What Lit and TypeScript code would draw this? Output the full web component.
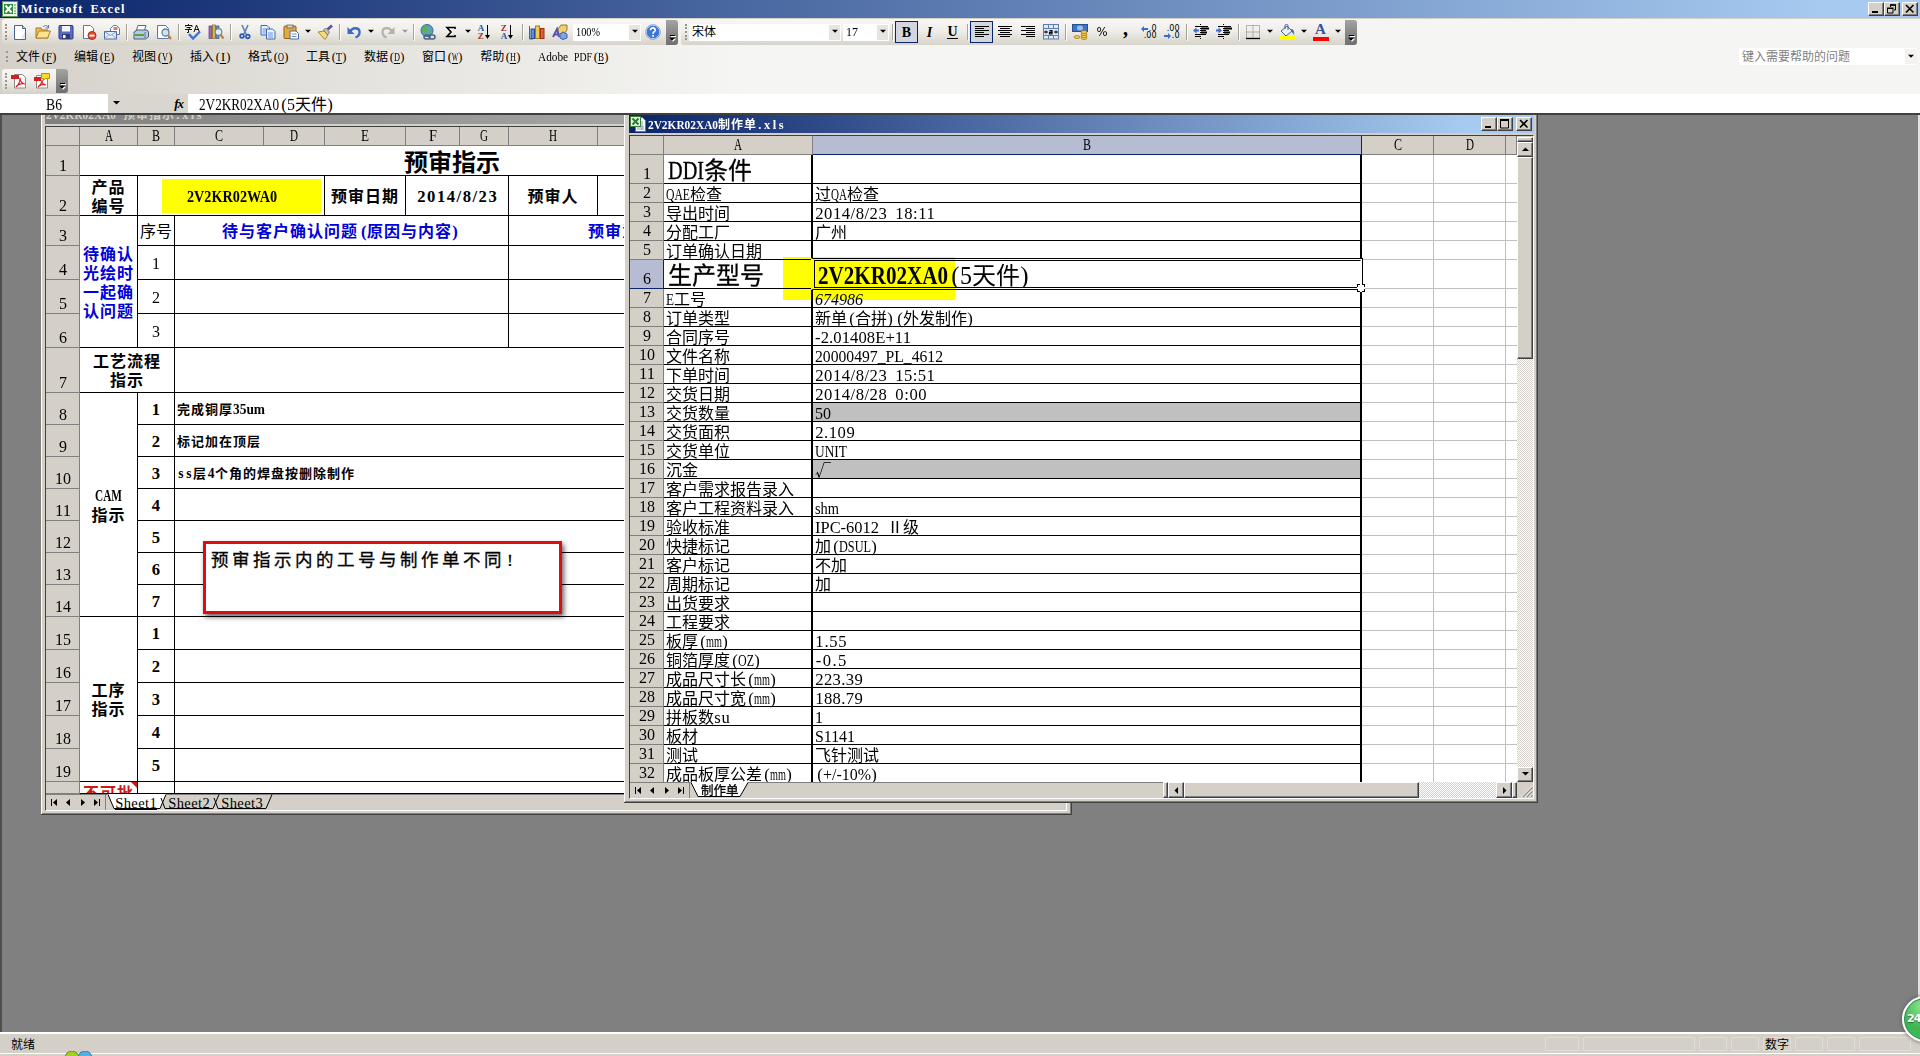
import { LitElement, html, svg, css, nothing, TemplateResult } from "lit";
import { customElement } from "lit/decorators.js";
import { classMap } from "lit/directives/class-map.js";
import { styleMap } from "lit/directives/style-map.js";

/* ---------- half-width Latin text, set on a fixed pitch beside CJK ---------- */

const ctx = document.createElement("canvas").getContext("2d")!;
function natural(s: string, size: number, bold: boolean): number {
  ctx.font = `${bold ? "bold " : ""}${size}px "Liberation Serif"`;
  return ctx.measureText(s).width;
}

function t(text: string, fs = 16, half = fs / 2, bold = false): TemplateResult {
  const size = fs * 1.04;
  const parts = text.match(/[()]|[\x21-\x27\x2a-\x7e]+|[^\x21-\x7e]+/g) ?? [];
  return html`${parts.map((p) => {
    if (!/^[\x21-\x7e]/.test(p)) {
      return p
        .split(/( +)/)
        .filter(Boolean)
        .map((q) =>
          q[0] === " "
            ? html`<span style=${styleMap({ display: "inline-block", width: `${q.length * half}px` })}></span>`
            : q
        );
    }
    const target = p.length * half;
    const w = natural(p, size, bold);
    const k = target / w;
    const outer = {
      display: "inline-block",
      width: `${target}px`,
      fontFamily: '"Liberation Serif", serif',
      fontSize: `${size}px`,
      lineHeight: "1",
      whiteSpace: "pre",
      textAlign: "left",
      letterSpacing: "0",
    };
    const gap = (target - w) / p.length;
    const lead = p === "(" ? gap * 0.9 : p === ")" ? gap * 0.1 : gap / 2;
    const inner =
      k < 1
        ? { display: "inline-block", transformOrigin: "0 50%", transform: `scaleX(${k})` }
        : { display: "inline-block", letterSpacing: `${gap}px`, marginLeft: `${lead}px` };
    return html`<span style=${styleMap(outer)}><span style=${styleMap(inner)}>${p}</span></span>`;
  })}`;
}
const b16 = (s: string) => t(s, 16, 9, true);

/* ---------- icons, 16 x 16 ---------- */

const ic: Record<string, TemplateResult> = {
  excel: svg`<rect x=".5" y=".5" width="15" height="15" fill="#e8f3e4" stroke="#5a9a58"/><rect x="2" y="3" width="9" height="10" fill="#2f8a3c"/><path d="M3.500 4.500l6 7M9.500 4.500l-6 7" stroke="#fff" stroke-width="2"/><path d="M12 4h2M12 7h2M12 10h2M12 12.500h2" stroke="#5a9a58"/>`,
  book: svg`<path d="M5.500 1.500h7l3 3v11h-10z" fill="#f4f8ff" stroke="#5577aa"/><path d="M12 5v9M7 11h7M7 13h7" stroke="#8aa4cc"/><rect x=".5" y=".5" width="10" height="10" fill="#e3f0df" stroke="#3c7d3c"/><path d="M2.500 2.500l6 6M8.500 2.500l-6 6" stroke="#23802f" stroke-width="2"/>`,
  page: svg`<path d="M2.500 1.500h8l3 3v11h-11z" fill="#fff" stroke="#46648f"/><path d="M10.500 1.500v3h3" fill="#c5d6f2" stroke="#46648f"/><path d="M9 14.500h4v-7z" fill="#dbe6f8"/>`,
  open: svg`<path d="M1 4h5l1 2h6v8H1z" fill="#f0c24c" stroke="#a5762a"/><path d="M1 14l3-7h11.500l-3 7z" fill="#ffe48f" stroke="#b07f2b"/><path d="M8 3c2-2 4-2 5 0M13.500 1v3h-3" stroke="#4a76b5" fill="none"/>`,
  save: svg`<rect x="1" y="1.500" width="14" height="13.500" rx="1" fill="#5c6bc0" stroke="#2b3a86"/><rect x="4" y="2" width="8" height="5.500" fill="#f3f5ff"/><rect x="4" y="10" width="8" height="5" fill="#2d3877"/><rect x="5" y="11" width="2.500" height="3" fill="#fff"/>`,
  perm: svg`<path d="M2.500 1.500h7l3 3v10h-10z" fill="#fff" stroke="#5b77a5"/><circle cx="11" cy="11.500" r="4" fill="#e0502c" stroke="#b12f12"/><rect x="8.500" y="10.700" width="5" height="1.800" fill="#fff"/>`,
  mail: svg`<path d="M6.500 4.500l3-3h3l3 3v6h-9z" fill="#fff" stroke="#5b77a5"/><rect x="9.500" y="3" width="4" height="3" fill="#e07a6a"/><rect x=".5" y="7.500" width="12" height="7.500" fill="#e5eefb" stroke="#4e6ca0"/><path d="M.5 7.500l6 4 6-4M.5 15l4-4M12.500 15l-4-4" fill="none" stroke="#7f9ac6"/>`,
  print: svg`<path d="M5 1.500h8l-2 6H3z" fill="#fff" stroke="#4c6b9c"/><path d="M1 8l3-2h10l1.500 2v5l-3 2H1z" fill="#bcc9da" stroke="#4b5e7c"/><path d="M2 11h9" stroke="#48a848" stroke-width="2"/><path d="M12 8v6" stroke="#5f7391"/>`,
  preview: svg`<path d="M1.500 1.500h8l3 3v10h-11z" fill="#fff" stroke="#5b77a5"/><circle cx="9.500" cy="8.500" r="3.500" fill="#cfe3f8" stroke="#66809d" stroke-width="1.300"/><path d="M12 11l3 4" stroke="#c08238" stroke-width="2.200"/>`,
  spell: svg`<path d="M0 3V1.500h7V3M3.500 0v1.500M1.500 3.500h4L3.500 5v3.500H2M0 5.500h7M9 8l2.500-7L14.500 8M10 5.500h4" stroke="#111" fill="none"/><path d="M4 10l4 4.500 7-7" stroke="#3f72c8" stroke-width="2.400" fill="none"/>`,
  research: svg`<rect x="1" y="2" width="3" height="12.500" fill="#9c6bb5" stroke="#5e3d77" stroke-width=".7"/><rect x="4.500" y="1" width="3" height="13.500" fill="#d8b54a" stroke="#86691d" stroke-width=".7"/><rect x="8" y="2" width="3" height="12.500" fill="#6d90c9" stroke="#355788" stroke-width=".7"/><circle cx="10.500" cy="8" r="3.300" fill="#dcecfb" stroke="#70859f" stroke-width="1.200"/><path d="M12.500 10.500l3 4" stroke="#c08238" stroke-width="2.200"/>`,
  cut: svg`<path d="M5 1l4 9M11 1L7 10" stroke="#5d7fb3" stroke-width="1.600"/><circle cx="5" cy="12" r="1.900" fill="none" stroke="#2755b5" stroke-width="1.600"/><circle cx="10.800" cy="12.500" r="1.900" fill="none" stroke="#2755b5" stroke-width="1.600"/>`,
  copy: svg`<path d="M1 1.500h6l2.500 2.500v7H1z" fill="#e9f1fd" stroke="#3d68ac"/><path d="M2.500 5h4M2.500 7h4M2.500 9h3" stroke="#6a93d0"/><path d="M6.500 5h6l2.500 2.500v7.500H6.500z" fill="#e9f1fd" stroke="#3d68ac"/><path d="M8 9h5M8 11h5M8 13h5" stroke="#6a93d0"/>`,
  paste: svg`<rect x="1" y="2" width="12" height="12.500" rx="1" fill="#e5a93c" stroke="#8b5f1c"/><rect x="4" y="1" width="6" height="3" fill="#d6d2c5" stroke="#6c6552" stroke-width=".8"/><path d="M7 7h6l2.500 2.500V15H7z" fill="#fff" stroke="#4c6ba0"/><path d="M8.500 10h5M8.500 12.500h5" stroke="#6a93d0"/>`,
  painter: svg`<path d="M1 8l6-1 4 4-3 4.500z" fill="#f5dd7d" stroke="#a98527"/><path d="M6.500 6l2-2 4 4-2 3z" fill="#c9c4b8" stroke="#6d675c" stroke-width=".8"/><path d="M10.500 5.500L15 1.500" stroke="#5b54a0" stroke-width="2.800"/>`,
  undo: svg`<path d="M4 8c2-5 9-5 9.500-.5.300 3-1.500 5-4 6" fill="none" stroke="#3e6cc0" stroke-width="2.400"/><path d="M1.500 3v7h7z" fill="#3e6cc0"/>`,
  redo: svg`<path d="M12 8c-2-5-9-5-9.500-.5-.3 3 1.500 5 4 6" fill="none" stroke="#b2b2ae" stroke-width="2.200"/><path d="M14.500 3v7h-7z" fill="#b2b2ae"/>`,
  link: svg`<circle cx="7" cy="6.500" r="6" fill="#5f9fd0" stroke="#386a94"/><path d="M3 3c2-2 4-2 5-1 1 2-2 3-1 5s-3 3-4 1-2-2 0-5zM10 5l2 1-1 4-2-1z" fill="#5cb05a"/><rect x="4" y="11" width="6" height="4" rx="2" fill="none" stroke="#4b6186" stroke-width="1.500"/><rect x="9" y="11" width="6" height="4" rx="2" fill="none" stroke="#4b6186" stroke-width="1.500"/>`,
  sigma: svg`<path d="M12 5V3.500H4L8 8l-4 4.500h8V11" fill="none" stroke="#000" stroke-width="1.600"/>`,
  chart: svg`<path d="M.5 2v13H4" fill="none" stroke="#3f65a8"/><rect x="2" y="5" width="3.500" height="9.500" fill="#5d8bdb" stroke="#274f98"/><rect x="6.500" y="2" width="4" height="12.500" fill="#f2c84d" stroke="#a57c18"/><rect x="11.500" y="4.500" width="3.500" height="10" fill="#e2603a" stroke="#97300f"/>`,
  draw: svg`<path d="M6 5l3-4h6v5l-3 4H6z" fill="#f0cf6e" stroke="#9b7a27"/><path d="M1 13l4-8 2 8M2.500 10.500h4" stroke="#5756b8" stroke-width="2" fill="none"/><path d="M8 10l3-2 4 2v4l-4 1.500-3-1.500z" fill="#7fa2e0" stroke="#3e62a8"/>`,
  help: svg`<circle cx="8" cy="8" r="6.800" fill="#3d76d6" stroke="#dfe9fa" stroke-width="1"/><circle cx="8" cy="8" r="7.300" fill="none" stroke="#5c83bd" stroke-width=".7"/><path d="M5.500 6.300C5.500 3 10.500 3.300 10.300 6.200 10.200 7.800 8 7.600 8 9.700" fill="none" stroke="#fff" stroke-width="1.700"/><rect x="7.100" y="10.900" width="1.900" height="1.800" fill="#fff"/>`,
  left: svg`<path d="M1 2.500h14M1 4.500h9M1 6.500h14M1 8.500h9M1 10.500h14M1 12.500h9" stroke="#000"/>`,
  center: svg`<path d="M1 2.500h14M3 4.500h10M1 6.500h14M3 8.500h10M1 10.500h14M3 12.500h10" stroke="#000"/>`,
  right: svg`<path d="M1 2.500h14M6 4.500h9M1 6.500h14M6 8.500h9M1 10.500h14M6 12.500h9" stroke="#000"/>`,
  merge: svg`<rect x=".5" y=".5" width="15" height="14.500" fill="#dfe8f6" stroke="#5f7eae"/><path d="M1 4.500h14M1 11.500h14M5.500 1v3M10.500 1v3M5.500 12v3M10.500 12v3" stroke="#5f7eae"/><path d="M1 8h4M15 8h-4M3 6.500v3M13 6.500v3" stroke="#000"/><path d="M6.500 6.700h2.500v3.300H6.500V8.300H9" fill="none" stroke="#000" stroke-width="1.200"/>`,
  money: svg`<rect x=".5" y=".5" width="15" height="7" fill="#3f73c4" stroke="#28518f"/><ellipse cx="8" cy="4" rx="3" ry="2.500" fill="#9ec0ee"/><g fill="#f3c752" stroke="#a07518" stroke-width=".7"><ellipse cx="12" cy="14" rx="3" ry="1.500"/><ellipse cx="12" cy="12" rx="3" ry="1.500"/><ellipse cx="12" cy="10" rx="3" ry="1.500"/><ellipse cx="12" cy="8" rx="3" ry="1.500"/><ellipse cx="5" cy="13" rx="3" ry="1.500"/></g>`,
  outdent: svg`<path d="M2 2.500h13M8 4.500h8M8 6.500h5M8 8.500h6M2 10.500h11M2 12.500h5" stroke="#000" stroke-dasharray="none"/><path d="M8 4.500h8M8 8.500h6" stroke="#000" stroke-width="2"/><path d="M7.500 0v16" stroke="#000" stroke-dasharray="1 1"/><path d="M0 6.500L3.500 3.500v2H6v2H3.500v2z" fill="#3b6bd0"/>`,
  indent: svg`<path d="M2 2.500h13M8 4.500h8M8 6.500h5M8 8.500h6M2 10.500h11M2 12.500h5" stroke="#000" stroke-dasharray="none"/><path d="M8 4.500h8M8 8.500h6" stroke="#000" stroke-width="2"/><path d="M7.500 0v16" stroke="#000" stroke-dasharray="1 1"/><path d="M6 6.500L2.500 3.500v2H0v2h2.500v2z" fill="#3b6bd0"/>`,
  border: svg`<path d="M1.500 1.500h13v13h-13zM8 1.500v13M1.500 8h13" fill="none" stroke="#777" stroke-dasharray="1 1"/><path d="M1 14.500h14" stroke="#000" stroke-width="1.300"/>`,
  fill: svg`<path d="M2 7l6-5 5 5-6 5z" fill="#eaf1fb" stroke="#3c5f99"/><path d="M6 5V1.500c0-1.500 3-1.500 3 0V6" fill="none" stroke="#3c5f99"/><path d="M12 5c3 0 3.500 3 3 6-1-2-2-3-3-3.500z" fill="#3f6fc4"/><rect x="0" y="12" width="16" height="4" fill="#ff0"/>`,
  pdf: svg`<path d="M3.500 1.500h8l3 3v10.500h-11z" fill="#fff" stroke="#8a8a8a"/><rect x="0" y="2" width="8" height="4" fill="#d41f1f"/><path d="M9 5c0 4-1.500 7-4 9 1-2 5-4 9-3-3 0-5-3-5-6z" fill="none" stroke="#d41f1f" stroke-width="1.200"/>`,
  pdfc: svg`<path d="M2.500 2.500h8l3 3v9.500h-11z" fill="#fff" stroke="#8a8a8a"/><rect x="0" y="4" width="7" height="4" fill="#d41f1f"/><path d="M8 7c0 4-1.500 5-4 7 1-2 5-3 8-2-3 0-4-2-4-5z" fill="none" stroke="#d41f1f" stroke-width="1.200"/><path d="M7.500.5h8v5h-4l-2 2V5.500h-2z" fill="#ffd928" stroke="#b8920c"/>`,
};
const icon = (n: string) => html`<svg width="16" height="16" viewBox="0 0 16 16">${ic[n]}</svg>`;
const tri = (dir: "d" | "u" | "l" | "r", c = "#000") => {
  const d = { d: "M0 1h7L3.500 4.500z", u: "M0 5h7L3.500 1.500z", l: "M5 0v7L1.500 3.500z", r: "M2 0v7l3.500-3.500z" }[dir];
  return html`<svg width="7" height="7" viewBox="0 0 7 7"><path d=${d} fill=${c} /></svg>`;
};

const shared = css`
  * { box-sizing: border-box; }
  svg { display: block; flex: none; }
  .capbtn { width: 16px; height: 14px; background: #d4d0c8; border: 1px solid; border-color: #fff #404040 #404040 #fff; box-shadow: inset -1px -1px #808080; display: flex; align-items: center; justify-content: center; }
  .bold { font-weight: bold; }
`;
const capBtn = (kind: "min" | "max" | "restore" | "close") => html`<span class="capbtn">
  <svg width="10" height="10" viewBox="0 0 10 10">
    ${kind === "min" ? svg`<rect x="1" y="7" width="6" height="2"/>` : nothing}
    ${kind === "max" ? svg`<path d="M.5 1h8v8h-8z" fill="none" stroke="#000"/><rect x="0" y="0" width="9" height="2"/>` : nothing}
    ${kind === "restore" ? svg`<path d="M3.500 3V1h5v5H7M.5 4.500h5.500V9H.5z" fill="none" stroke="#000"/><path d="M3 1h6M0 4.300h6.500" stroke="#000" stroke-width="1.600"/>` : nothing}
    ${kind === "close" ? svg`<path d="M1 1l7.500 7.500M8.500 1L1 8.500" stroke="#000" stroke-width="1.600"/>` : nothing}
  </svg></span>`;

/* ---------- toolbars, menu, formula bar ---------- */

@customElement("xl-bars")
export class XlBars extends LitElement {
  static styles = [
    shared,
    css`
      :host { display: block; font-size: 12px; }
      .dock { height: 76px; background: linear-gradient(90deg, #d5d1c9 0, #f5f5f3 740px); border-top: 1px solid #d4d0c8; }
      .row { display: flex; align-items: stretch; height: 26px; }
      .bar { display: flex; align-items: center; height: 26px; background: linear-gradient(#f8f7f5, #efeeea 45%, #d6d3c9); border-radius: 3px; padding-left: 6px; }
      .std { margin-left: 2px; width: 676px; }
      .fmt { margin-left: 3px; width: 676px; padding-left: 8px; }
      .grip { width: 0; height: 16px; border-left: 2px dotted #9a968c; }
      .std > .grip { margin-left: -3px; margin-right: 1px; }
      .fmt .grip { margin-left: -4px; margin-right: 2px; }
      .i { width: 23px; height: 22px; display: flex; align-items: center; justify-content: center; flex: none; }
      .on { border: 1px solid #0a246a; background: #d3d6df; }
      .sep { width: 6px; height: 16px; flex: none; display: flex; justify-content: center; }
      .sep::before { content: ""; width: 1px; background: #a6a397; box-shadow: 1px 1px #fff; }
      .ar { width: 11px; flex: none; display: flex; justify-content: center; align-items: center; }
      .ar svg { width: 6px; height: 6px; }
      .combo { height: 17px; background: #fff; display: flex; align-items: center; justify-content: space-between; padding-left: 3px; flex: none; line-height: 16px; }
      .combo > span:first-child { margin-top: -3px; }
      .combo .drop { width: 11px; height: 15px; margin-right: 1px; background: #e7e5df; display: flex; align-items: center; justify-content: center; }
      .combo .drop svg { width: 6px; height: 6px; }
      .w68 { width: 68px; margin-left: 2px; }
      .w152 { width: 152px; }
      .w46 { width: 46px; margin-left: 2px; }
      .cap { width: 12px; height: 25px; margin-left: auto; background: linear-gradient(#a3a3a3, #6f6f6f); border-radius: 0 3px 3px 0; display: flex; flex-direction: column; align-items: center; justify-content: flex-end; padding-bottom: 2px; gap: 1px; }
      .cap::before { content: ""; width: 5px; height: 1px; background: #000; box-shadow: 1px 1px #fff; }
      .cap svg { width: 6px; height: 6px; filter: drop-shadow(1px 1px 0 #fff); }
      .g { font-family: "Liberation Serif", serif; font-weight: bold; font-size: 14px; line-height: 15px; }
      .it { font-style: italic; }
      .ul { border-bottom: 1px solid #000; line-height: 12px; }
      .comma { font-size: 20px; line-height: 8px; margin-top: -8px; }
      .dec { font: 8px/7px "DejaVu Sans", sans-serif; color: #000; display: flex; flex-direction: column; align-items: flex-end; width: 16px; }
      .dec span { display: flex; align-items: center; }
      .dec svg { margin-right: 1px; }
      .az { display: flex; align-items: center; }
      .azl { font: bold 9px/8px "Liberation Serif", serif; display: flex; flex-direction: column; }
      .r { color: #a03030; } .b { color: #35529f; }
      .pct { font: 13px "DejaVu Sans", sans-serif; line-height: 14px; transform: scaleX(.9); }
      .fa { display: flex; flex-direction: column; align-items: center; font: bold 15px/11px "Liberation Serif", serif; color: #34539b; }
      .fa::after { content: ""; width: 16px; height: 4px; background: #f00; margin-top: 2px; }
      .menu { height: 23px; display: flex; align-items: center; padding-left: 6px; line-height: 14px; margin-bottom: 1px; }
      .menu .m { margin-left: 16px; white-space: nowrap; }
      .menu .grip { height: 11px; margin-right: -8px; }
      .menu u { text-decoration: none; display: inline-block; border-bottom: 1px solid #000; line-height: 12px; }
      .ask { margin-left: auto; width: 178px; height: 17px; background: #fff; color: #808080; display: flex; align-items: center; justify-content: space-between; padding-left: 3px; margin-right: 3px; line-height: 16px; }
      .ask > span:first-child { margin-top: -2px; }
      .ask .drop { width: 12px; height: 15px; background: #f3f2ef; display: flex; align-items: center; justify-content: center; }
      .ask .drop svg { width: 6px; height: 6px; }
      .pdfs { height: 24px; width: 66px; margin-left: 2px; padding-left: 3px; }
      .pdfs .cap { height: 24px; }
      .formula { height: 19px; display: flex; background: #fff; font-size: 16px; line-height: 19px; }
      .name { width: 106px; margin-left: 2px; text-align: center; padding-right: 2px; }
      .mid { width: 80px; background: #d9d6cf; display: flex; align-items: center; padding-left: 5px; justify-content: space-between; padding-right: 5px; }
      .fx { font: italic bold 13px/18px "Liberation Serif", serif; letter-spacing: -1px; }
      .val { padding-left: 11px; white-space: nowrap; }
    `,
  ];
  private i(n: string, on = false) {
    return html`<span class=${classMap({ i: true, on })}>${icon(n)}</span>`;
  }
  private sep = html`<span class="sep"></span>`;
  private ar = (c = "#000") => html`<span class="ar">${tri("d", c)}</span>`;
  private cap = html`<span class="cap">${tri("d")}</span>`;
  private sort(a: string, b: string) {
    const f = a === "A";
    return html`<span class="i"><span class="az"><span class="azl"><span class=${f ? "b" : "r"}>${a}</span><span class=${f ? "r" : "b"}>${b}</span></span>
      <svg width="7" height="16" viewBox="0 0 7 16"><path d="M3.500 1v11" stroke="#000" /><path d="M1 11h5l-2.500 4z" /></svg></span></span>`;
  }
  private arrow(left: boolean) {
    return html`<svg width="7" height="6" viewBox="0 0 7 6"><path d=${left ? "M0 3l3-3v2h4v2H3v2z" : "M7 3L4 0v2H0v2h4v2z"} fill="#3b6bd0" /></svg>`;
  }
  private menus: [string, string][] = [["文件", "F"], ["编辑", "E"], ["视图", "V"], ["插入", "I"], ["格式", "O"], ["工具", "T"], ["数据", "D"], ["窗口", "W"], ["帮助", "H"], ["Adobe PDF", "B"]];
  render() {
    const { sep, ar, cap } = this;
    return html`
      <div class="dock">
        <div class="row">
          <div class="bar std">
            <span class="grip"></span>
            ${["page", "open", "save", "perm", "mail"].map((n) => this.i(n))}${sep}
            ${this.i("print")}${this.i("preview")}${sep}${this.i("spell")}${this.i("research")}${sep}
            ${this.i("cut")}${this.i("copy")}${this.i("paste")}${ar()}${this.i("painter")}${sep}
            ${this.i("undo")}${ar()}${this.i("redo")}${ar("#999")}${sep}
            ${this.i("link")}${this.i("sigma")}${ar()}${this.sort("A", "Z")}${this.sort("Z", "A")}${sep}
            ${this.i("chart")}${this.i("draw")}
            <span class="combo w68"><span>${t("100%", 12)}</span><span class="drop">${tri("d")}</span></span>
            ${this.i("help")}${cap}
          </div>
          <div class="bar fmt">
            <span class="grip"></span>
            <span class="combo w152"><span>宋体</span><span class="drop">${tri("d")}</span></span>
            <span class="combo w46"><span>${t("17", 12)}</span><span class="drop">${tri("d")}</span></span>${sep}
            <span class="i on"><span class="g">B</span></span>
            <span class="i"><span class="g it">I</span></span>
            <span class="i"><span class="g ul">U</span></span>${sep}
            ${this.i("left", true)}${this.i("center")}${this.i("right")}${this.i("merge")}${sep}
            ${this.i("money")}<span class="i"><span class="pct">%</span></span><span class="i"><span class="g comma">,</span></span>
            <span class="i"><span class="dec"><span>${this.arrow(true)}.0</span><span>.00</span></span></span>
            <span class="i"><span class="dec"><span>.00</span><span>${this.arrow(false)}.0</span></span></span>${sep}
            ${this.i("outdent")}${this.i("indent")}${sep}
            ${this.i("border")}${ar()}${this.i("fill")}${ar()}<span class="i"><span class="fa">A</span></span>${ar()}${cap}
          </div>
        </div>
        <div class="menu">
          <span class="grip"></span>
          ${this.menus.map(([a, k]) => html`<span class="m">${t(a, 12)}${t("(", 12)}<u>${t(k, 12)}</u>${t(")", 12)}</span>`)}
          <span class="ask"><span>键入需要帮助的问题</span><span class="drop">${tri("d")}</span></span>
        </div>
        <div class="bar pdfs"><span class="grip"></span>${this.i("pdf")}${this.i("pdfc")}${cap}</div>
      </div>
      <div class="formula">
        <span class="name">${t("B6")}</span>
        <span class="mid">${tri("d")}<span class="fx">fx</span></span>
        <span class="val">${t("2V2KR02XA0(5天件)")}</span>
      </div>
    `;
  }
}

/* ---------- sheet tabs ---------- */

const tabStyles = css`
  .tabs { height: 16px; display: flex; align-items: stretch; background: #d4d0c8; border-top: 1px solid #808080; }
  .nav { display: flex; align-items: center; width: 60px; border-right: 1px solid #808080; justify-content: space-between; padding: 0 4px; }
`;
const nav = html`<span class="nav">
  <svg width="8" height="8" viewBox="0 0 8 8"><path d="M1 0h1v7H1zM7 0v7L3 3.500z" /></svg>
  <svg width="8" height="8" viewBox="0 0 8 8"><path d="M6 0v7L2 3.500z" /></svg>
  <svg width="8" height="8" viewBox="0 0 8 8"><path d="M2 0v7l4-3.500z" /></svg>
  <svg width="8" height="8" viewBox="0 0 8 8"><path d="M6 0h1v7H6zM1 0v7l4-3.500z" /></svg>
</span>`;

/* ---------- background workbook ---------- */

@customElement("xl-review-sheet")
export class XlReviewSheet extends LitElement {
  static styles = [
    shared,
    tabStyles,
    css`
      :host { display: block; height: 100%; }
      .title { height: 19px; margin: 0 4px; background: linear-gradient(90deg, #808080, #c0c0c0); color: #d4d0c8; font-size: 12px; font-weight: bold; letter-spacing: 1px; line-height: 17px; padding-left: 1px; white-space: nowrap; }
      .client { margin: 2px 4px 0; border-left: 1px solid #404040; border-top: 1px solid #404040; border-right: 1px solid #fff; border-bottom: 1px solid #fff; }
      .grid { display: grid; grid-template-columns: 34px 58px 37px 89px 61px 81px 54px 49px 89px 1fr; grid-template-rows: 19px 30px 40px 30px 34px 34px 34px 45px repeat(7, 32px) repeat(5, 33px) 12px; height: 667px; overflow: hidden; background: #fff; font-size: 16px; line-height: 19px; }
      .h { background: #d4d0c8; border-right: 1px solid #808080; border-bottom: 1px solid #808080; display: flex; align-items: flex-end; justify-content: center; line-height: 17px; overflow: hidden; }
      .c { border-right: 1px solid #000; border-bottom: 1px solid #000; display: flex; align-items: center; justify-content: center; text-align: center; overflow: hidden; white-space: nowrap; }
      .c.nr { border-right: 0; }
      .c.b { font-weight: bold; letter-spacing: 1px; }
      .big { font-size: 24px; font-weight: bold; padding-right: 242px; }
      .blue { color: #0000d8; }
      .red { color: #d01818; align-items: flex-start; position: relative; padding-top: 1px; }
      .red::after { content: ""; position: absolute; right: 0; top: 0; border: 3px solid #d01818; border-left-color: transparent; border-bottom-color: transparent; }
      .note { font-size: 13px; justify-content: flex-start; padding-left: 2px; }
      .peek { justify-content: flex-start; padding-left: 79px; }
      .top { align-items: flex-start; padding-top: 6px; }
      .hl { background: #ff0; width: 159px; height: 34px; display: flex; align-items: center; justify-content: center; margin-left: 20px; padding: 3px 19px 0 0; }
      .tab { font-size: 14px; line-height: 15px; width: 53px; padding-left: 7px; }
      .tabset { display: flex; position: relative; width: 168px; margin-left: 2px; }
      .tabset svg { position: absolute; left: 0; top: -1px; }
      .tab span { position: relative; }
      .first span.n { display: inline-block; border-bottom: 1px solid #000; line-height: 13px; height: 14px; }
    `,
  ];
  private cell(row: number, rs: number, col: number, cs: number, cls: string, body: unknown = nothing) {
    return html`<div class="c ${cls}" style=${styleMap({ gridArea: `${row} / ${col} / span ${rs} / span ${cs}` })}><span>${body}</span></div>`;
  }
  /* Arguments: row, row span, column, column span, classes, content. */
  render() {
    const c = (row: number, rs: number, col: number, cs: number, cls: string, body?: unknown) =>
      this.cell(row, rs, col, cs, cls, body ?? nothing);
    const notes = ["完成铜厚35um", "标记加在顶层", "ss层4个角的焊盘按删除制作", "", "", "", ""];
    return html`
      <div class="title">${t("2V2KR02XA0 预审指示.xls", 12, 7, true)}</div>
      <div class="client">
        <div class="grid">
          ${["", ..."ABCDEFGH", ""].map((l, i) => html`<div class="h" style=${styleMap({ gridArea: `1 / ${i + 1}` })}>${t(l)}</div>`)}
          ${Array.from({ length: 20 }, (_, i) => html`<div class="h" style=${styleMap({ gridArea: `${i + 2} / 1` })}>${i < 19 ? t(String(i + 1)) : nothing}</div>`)}
          ${c(2, 1, 2, 9, "big nr", "预审指示")}
          ${c(3, 1, 2, 1, "b", html`产品<br />编号`)}
          ${c(3, 1, 3, 3, "b", html`<span class="hl">${b16("2V2KR02WA0")}</span>`)}
          ${c(3, 1, 6, 1, "b", "预审日期")} ${c(3, 1, 7, 2, "b", b16("2014/8/23"))}
          ${c(3, 1, 9, 1, "b", "预审人")} ${c(3, 1, 10, 1, "nr")}
          ${c(4, 4, 2, 1, "b blue", html`待确认<br />光绘时<br />一起确<br />认问题`)}
          ${c(4, 1, 3, 1, "", "序号")} ${c(4, 1, 4, 5, "b blue", b16("待与客户确认问题(原因与内容)"))}
          ${c(4, 1, 9, 2, "b blue peek nr", "预审意见")}
          ${[1, 2, 3].map((n) => html`${c(4 + n, 1, 3, 1, "", t(String(n)))}${c(4 + n, 1, 4, 5, "")}${c(4 + n, 1, 9, 2, "nr")}`)}
          ${c(8, 1, 2, 2, "b", html`工艺流程<br />指示`)} ${c(8, 1, 4, 7, "nr")}
          ${c(9, 7, 2, 1, "b", html`${b16("CAM")}<br />指示`)}
          ${notes.map((n, i) => html`${c(9 + i, 1, 3, 1, "b", b16(String(i + 1)))}${c(9 + i, 1, 4, 7, "b note nr", t(n, 13, 8, true))}`)}
          ${c(16, 5, 2, 1, "b", html`工序<br />指示`)}
          ${[1, 2, 3, 4, 5].map((n) => html`${c(15 + n, 1, 3, 1, "b", b16(String(n)))}${c(15 + n, 1, 4, 7, "nr")}`)}
          ${c(21, 1, 2, 1, "b red", "不可批")} ${c(21, 1, 3, 1, "b top", b16("1"))} ${c(21, 1, 4, 7, "nr")}
        </div>
        <div class="tabs">
          ${nav}
          <span class="tabset">
            <svg width="172" height="16" viewBox="0 0 172 16">
              <path d="M0 0l6 14.500h46L58 0z" fill="#fff" />
              <path d="M0 .5l6 14h46L58 .5M53 4l4 10.500h48L111 .5M106 4l4 10.500h48L164 .5" fill="none" stroke="#000" />
            </svg>
            ${["Sheet1", "Sheet2", "Sheet3"].map((s, i) => html`<span class="tab ${i === 0 ? "first" : ""}"><span class="n">${t(s, 14)}</span></span>`)}
          </span>
        </div>
      </div>
    `;
  }
}

/* ---------- active workbook ---------- */

interface Row { a: string; b: string; big?: boolean; gray?: boolean }
const rows: Row[] = [
  { a: "DDI条件", b: "", big: true },
  { a: "QAE检查", b: "过QA检查" },
  { a: "导出时间", b: "2014/8/23 18:11" },
  { a: "分配工厂", b: "广州" },
  { a: "订单确认日期", b: "" },
  { a: "生产型号", b: "", big: true },
  { a: "E工号", b: "674986" },
  { a: "订单类型", b: "新单(合拼)(外发制作)" },
  { a: "合同序号", b: "-2.01408E+11" },
  { a: "文件名称", b: "20000497_PL_4612" },
  { a: "下单时间", b: "2014/8/23 15:51" },
  { a: "交货日期", b: "2014/8/28 0:00" },
  { a: "交货数量", b: "50", gray: true },
  { a: "交货面积", b: "2.109" },
  { a: "交货单位", b: "UNIT" },
  { a: "沉金", b: "√", gray: true },
  { a: "客户需求报告录入", b: "" },
  { a: "客户工程资料录入", b: "shm" },
  { a: "验收标准", b: "IPC-6012 Ⅱ级" },
  { a: "快捷标记", b: "加(DSUL)" },
  { a: "客户标记", b: "不加" },
  { a: "周期标记", b: "加" },
  { a: "出货要求", b: "" },
  { a: "工程要求", b: "" },
  { a: "板厚(mm)", b: "1.55" },
  { a: "铜箔厚度(OZ)", b: "-0.5" },
  { a: "成品尺寸长(mm)", b: "223.39" },
  { a: "成品尺寸宽(mm)", b: "188.79" },
  { a: "拼板数su", b: "1" },
  { a: "板材", b: "S1141" },
  { a: "测试", b: "飞针测试" },
  { a: "成品板厚公差(mm)", b: "(+/-10%)" },
];

@customElement("xl-order-sheet")
export class XlOrderSheet extends LitElement {
  static styles = [
    shared,
    tabStyles,
    css`
      :host { display: block; height: 100%; padding: 3px 3px 0 5px; }
      .title { height: 18px; background: linear-gradient(90deg, #0a246a, #a6caf0 92%); color: #fff; font-size: 12px; font-weight: bold; letter-spacing: 1px; line-height: 18px; display: flex; align-items: center; padding: 0 2px 0 1px; white-space: nowrap; }
      .title .name { margin-left: 2px; flex: 1; }
      .title .capbtn:last-child { margin-left: 3px; }
      .client { margin-top: 2px; border-left: 1px solid #404040; border-top: 1px solid #404040; border-right: 1px solid #fff; border-bottom: 1px solid #fff; }
      .upper { display: flex; height: 646px; }
      .sheet { position: relative; width: 887px; overflow: hidden; background: #fff; font-size: 16px; }
      .r { display: grid; grid-template-columns: 34px 149px 549px 72px 72px 11px; height: 19px; line-height: 18px; }
      .r.big { height: 29px; font-size: 24px; line-height: 27px; }
      .h { background: #d4d0c8; border-right: 1px solid #808080; border-bottom: 1px solid #808080; display: flex; align-items: flex-end; justify-content: center; font-size: 16px; line-height: 16px; }
      .h.sel { background: #b6bdd2; border-color: #0a246a; }
      .a, .b { border-bottom: 1px solid #000; border-right: 2px solid #000; white-space: nowrap; padding-left: 2px; }
      .a > span, .b > span { display: block; height: 18px; }
      .big .a { padding-left: 4px; -webkit-text-stroke: .3px #000; }
      .big .b { padding-left: 5px; position: relative; }
      .gray { background: #c0c0c0; }
      .it { font-style: italic; }
      .e { border-bottom: 1px solid #c0c0c0; border-right: 1px solid #c0c0c0; }
      .e:last-child { border-right: 0; }
      .ring { position: absolute; left: -2px; top: -2px; width: 552px; height: 32px; border: 1px solid #000; border-left: 2px solid #fff; }
      .ring::before { content: ""; position: absolute; left: 1px; right: 1px; top: 1px; bottom: 1px; border: 1px solid #000; border-right-color: #fff; box-shadow: 0 0 0 1px #fff; }
      .ring::after { content: ""; position: absolute; right: -3px; bottom: -3px; width: 6px; height: 6px; border: 1px dashed #000; background: #fff; }
      .hl { position: absolute; left: 153px; top: 121px; width: 172px; height: 43px; background: #ff0; mix-blend-mode: multiply; }
      .vs { width: 16px; display: flex; flex-direction: column; }
      .track { background: repeating-conic-gradient(#fff 0 25%, #d4d0c8 0 50%) 0 0 / 2px 2px; }
      .btn { background: #d4d0c8; border: 1px solid; border-color: #fff #404040 #404040 #fff; box-shadow: inset -1px -1px #808080; display: flex; align-items: center; justify-content: center; flex: none; }
      .vs .split { height: 5px; margin-top: 1px; }
      .vs .bb { height: 15px; }
      .vs .thumb { height: 202px; }
      .vs .track { flex: 1; }
      .tabs { border-top: 0; }
      .left { display: flex; width: 533px; border-top: 1px solid #808080; }
      .tab { position: relative; width: 60px; padding-left: 11px; font-size: 12.500px; line-height: 14px; }
      .tab svg { position: absolute; left: 1px; top: -1px; }
      .tab span { position: relative; display: inline-block; border-bottom: 1px solid #000; height: 14px; -webkit-text-stroke: .3px #000; }
      .w5 { width: 5px; } .w15 { width: 16px; } .w235 { width: 235px; }
      .tabs .track { flex: 1; }
      .corner { width: 16px; }
    `,
  ];
  render() {
    return html`
      <div class="title">${icon("book")}<span class="name">${t("2V2KR02XA0制作单.xls", 12, 7, true)}</span>${capBtn("min")}${capBtn("max")}${capBtn("close")}</div>
      <div class="client">
        <div class="upper">
          <div class="sheet">
            <div class="r">
              <div class="h"></div><div class="h">${t("A")}</div><div class="h sel">${t("B")}</div>
              <div class="h">${t("C")}</div><div class="h">${t("D")}</div><div class="h"></div>
            </div>
            ${rows.map((r, i) => {
              const n = i + 1;
              const fs = r.big ? 24 : 16;
              return html`<div class=${classMap({ r: true, big: !!r.big })}>
                <div class=${classMap({ h: true, sel: n === 6 })}>${t(String(n))}</div>
                <div class="a"><span>${t(r.a, fs)}</span></div>
                <div class=${classMap({ b: true, gray: !!r.gray, it: n === 7 })}>
                  <span>${n === 6 ? html`<span class="bold">${t("2V2KR02XA0", 24, 13, true)}</span>${t("(5天件)", 24)}` : t(r.b, fs)}</span>
                  ${n === 6 ? html`<div class="ring"></div>` : nothing}
                </div>
                <div class="e"></div><div class="e"></div><div class="e"></div>
              </div>`;
            })}
            <div class="hl"></div>
          </div>
          <div class="vs">
            <span class="btn split"></span><span class="btn bb">${tri("u")}</span><span class="btn thumb"></span>
            <span class="track"></span><span class="btn bb">${tri("d")}</span>
          </div>
        </div>
        <div class="tabs">
          <div class="left">
            ${nav}
            <span class="tab">
              <svg width="60" height="16" viewBox="0 0 60 16"><path d="M0 0l7 14.500h42L57 0z" fill="#fff" /><path d="M0 .5l7 14h42l8-14" fill="none" stroke="#000" /></svg>
              <span>制作单</span>
            </span>
          </div>
          <span class="btn w5"></span><span class="btn w15">${tri("l")}</span><span class="btn w235"></span>
          <span class="track"></span><span class="btn w15">${tri("r")}</span><span class="btn w5"></span>
          <svg class="corner" width="15" height="15" viewBox="0 0 15 15"><path d="M5 15L15 5M9 15l6-6M13 15l2-2" stroke="#808080" stroke-width="1.500" /><path d="M4 15L15 4M8 15l7-7M12 15l3-3" stroke="#fff" /></svg>
        </div>
      </div>
    `;
  }
}

/* ---------- application ---------- */

@customElement("app-root")
export class AppRoot extends LitElement {
  static styles = [
    shared,
    css`
      :host { display: flex; flex-direction: column; position: relative; width: 1920px; height: 1056px; overflow: hidden; background: #d4d0c8; color: #000; font-family: "Noto Sans CJK SC", sans-serif; font-size: 12px; }
      .title { height: 18px; flex: none; background: linear-gradient(90deg, #0a246a, #a6caf0 95%); color: #fff; font-weight: bold; display: flex; align-items: center; padding: 0 2px; line-height: 15px; }
      .title .name { flex: 1; margin-left: 2px; margin-top: -2px; }
      .title .capbtn:last-child { margin-left: 2px; }
      .ws { flex: none; height: 919px; border-top: 2px solid #404040; background: #808080; position: relative; overflow: hidden; box-shadow: inset 2px 0 #505050, inset -2px 0 #e4e2dc; }
      .win { position: absolute; background: #d4d0c8; border-right: 1px solid #404040; border-bottom: 1px solid #404040; box-shadow: inset 2px 0 0 -1px #fff, inset -1px -1px #808080; }
      .w1 { left: 41px; top: -10px; width: 1031px; height: 710px; }
      .w2 { left: 624px; top: -3px; width: 914px; height: 691px; z-index: 1; }
      .callout { position: absolute; z-index: 2; left: 203px; top: 426px; width: 359px; height: 73px; border: 3px solid #dc0c10; background: #fff; box-shadow: 2px 3px 5px rgba(0, 0, 0, .6); padding: 3px 5px; font-size: 17.500px; letter-spacing: 3.500px; line-height: 24px; -webkit-text-stroke: .3px #000; white-space: nowrap; }
      .status { flex: 1; display: flex; flex-direction: column; position: relative; border-top: 2px solid #fff; }
      .line { height: 19px; display: flex; align-items: center; padding: 0 9px 0 11px; gap: 4px; }
      .ready { margin-right: auto; }
      .box { height: 14px; border: 1px solid #e0ddd6; line-height: 12px; text-align: center; white-space: nowrap; padding: 0 1px; }
      .edge { border-top: 1px solid #fff; }
      .buds { position: absolute; left: 65px; bottom: -9px; z-index: 3; }
      .orb { position: absolute; left: 1902px; top: 996px; width: 46px; height: 46px; border-radius: 50%; border: 2px solid #fff; background: radial-gradient(circle at 45% 20%, #8fe68c, #3db553 55%, #3cc45a); box-shadow: 0 0 4px #555, inset 0 0 0 1px #2c8a52; color: #fff; font: bold 11px/41px "DejaVu Sans", sans-serif; letter-spacing: -1px; padding-left: 3px; text-shadow: 0 1px 1px #256b35; }
    `,
  ];
  render() {
    const boxes = [34, 112, 28, 28, 28, 28, 28, 52];
    return html`
      <div class="title">${icon("excel")}<span class="name">${t("Microsoft Excel", 12, 7, true)}</span>${capBtn("min")}${capBtn("restore")}${capBtn("close")}</div>
      <xl-bars></xl-bars>
      <div class="ws">
        <div class="win w1"><xl-review-sheet></xl-review-sheet></div>
        <div class="win w2"><xl-order-sheet></xl-order-sheet></div>
        <div class="callout">${t("预审指示内的工号与制作单不同!", 17, 10)}</div>
      </div>
      <div class="status">
        <div class="line">
          <span class="ready">就绪</span>
          ${boxes.map((w, i) => html`<span class="box" style=${styleMap({ width: `${w}px` })}>${i === 4 ? "数字" : nothing}</span>`)}
        </div>
        <div class="edge"></div>
        <svg class="buds" width="28" height="14" viewBox="0 0 28 14"><ellipse cx="7" cy="7" rx="7" ry="7" fill="#a3d020" stroke="#5f8a10" /><ellipse cx="20" cy="7" rx="7" ry="7" fill="#55aee8" stroke="#2f78b0" /></svg>
      </div>
      <div class="orb">24</div>
    `;
  }
}
